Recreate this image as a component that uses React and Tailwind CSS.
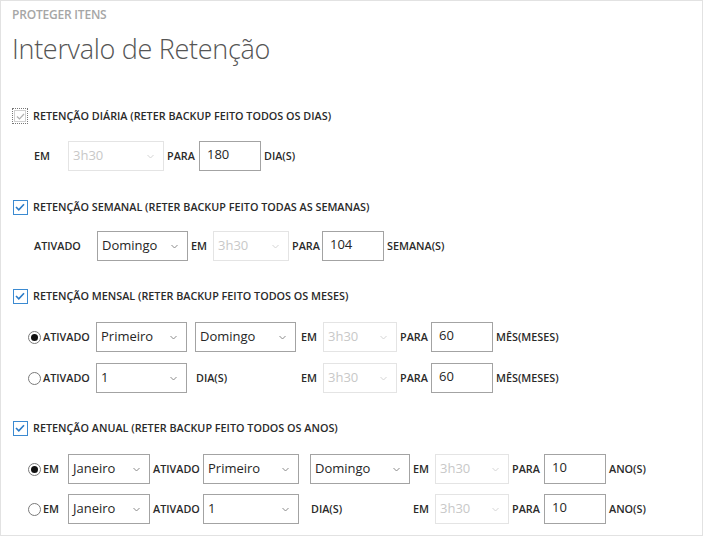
import React from "react";

const F = { fontFamily: '"Open Sans", "Noto Sans", sans-serif' };

function Chevron({ disabled }) {
  return (
    <svg width="7" height="5" viewBox="0 0 7 5" className="shrink-0">
      <path d="M0.5 1 L3.5 4 L6.5 1" fill="none" stroke={disabled ? "#d4d4d4" : "#8a8a8a"} strokeWidth="1" />
    </svg>
  );
}

function Select({ w, value, disabled }) {
  return (
    <div
      className={`h-[30px] ${w} flex items-center justify-between pl-[4px] pr-[9px] border shrink-0 ${
        disabled ? "border-[#e4e4e4] text-[#c8c8c8]" : "border-[#a3a3a3] text-[#262626]"
      } text-[13px]`}
    >
      <span className="leading-none -mt-[2px]">{value}</span>
      <Chevron disabled={disabled} />
    </div>
  );
}

function Input({ value }) {
  return (
    <div className="h-[30px] w-[62px] flex items-center pl-[7px] border border-[#a3a3a3] text-[13px] text-[#262626] shrink-0">
      <span className="leading-none -mt-[4px]">{value}</span>
    </div>
  );
}

function L({ children, w, cls = "" }) {
  return (
    <span className={`text-[10.8px] font-semibold text-[#2a2a2a] whitespace-nowrap shrink-0 ${w || ""} ${cls}`}>
      {children}
    </span>
  );
}

function Check({ dim }) {
  if (dim) {
    return (
      <div className="w-[16px] h-[16px] border border-dotted border-[#777] flex items-center justify-center shrink-0">
        <div className="w-[12px] h-[12px] border border-[#d0d0d0] flex items-center justify-center">
          <svg width="9" height="7" viewBox="0 0 9 7">
            <path d="M1 3.5 L3.5 6 L8 1" fill="none" stroke="#b0b0b0" strokeWidth="1.2" />
          </svg>
        </div>
      </div>
    );
  }
  return (
    <div className="w-[15px] h-[15px] border border-[#3b8ad1] bg-white flex items-center justify-center shrink-0">
      <svg width="10" height="8" viewBox="0 0 10 8">
        <path d="M1 4 L3.8 6.8 L9 1.2" fill="none" stroke="#2a7bc8" strokeWidth="1.6" />
      </svg>
    </div>
  );
}

function Header({ dim, children }) {
  return (
    <div className="h-[16px] flex items-center">
      <div className="w-[16px] flex justify-center">
        <Check dim={dim} />
      </div>
      <L cls="ml-[5px]">{children}</L>
    </div>
  );
}

function Radio({ on }) {
  return (
    <div className="w-[13px] h-[13px] rounded-full border border-[#7a7a7a] flex items-center justify-center shrink-0 bg-white">
      {on && <div className="w-[7px] h-[7px] rounded-full bg-[#111]" />}
    </div>
  );
}

export default function App() {
  return (
    <div style={F} className="w-[704px] h-[538px] bg-white">
      <div className="w-[703px] h-[536px] border border-[#e2e2e2] pl-[11px] flex flex-col">
        <div className="pt-[6px] text-[12px] font-semibold text-[#a6a6a6] tracking-[-0.2px] leading-[16px]">PROTEGER ITENS</div>
        <div className="mt-[8px] text-[27px] font-light text-[#555] leading-[36px] tracking-[-0.3px]">Intervalo de Retenção</div>

        <div className="mt-[41px]">
          <Header dim>RETENÇÃO DIÁRIA (RETER BACKUP FEITO TODOS OS DIAS)</Header>
        </div>
        <div className="mt-[17px] h-[30px] flex items-center">
          <L w="w-[34px]" cls="ml-[22px]">EM</L>
          <Select w="w-[96px]" value="3h30" disabled />
          <L w="w-[32px]" cls="ml-[3px]">PARA</L>
          <Input value="180" />
          <L cls="ml-[3px]">DIA(S)</L>
        </div>

        <div className="mt-[28px]">
          <Header>RETENÇÃO SEMANAL (RETER BACKUP FEITO TODAS AS SEMANAS)</Header>
        </div>
        <div className="mt-[16px] h-[30px] flex items-center">
          <L w="w-[63px]" cls="ml-[22px]">ATIVADO</L>
          <Select w="w-[91px]" value="Domingo" />
          <L w="w-[22px]" cls="ml-[3px]">EM</L>
          <Select w="w-[76px]" value="3h30" disabled />
          <L w="w-[30px]" cls="ml-[3px]">PARA</L>
          <Input value="104" />
          <L cls="ml-[3px]">SEMANA(S)</L>
        </div>

        <div className="mt-[27px]">
          <Header>RETENÇÃO MENSAL (RETER BACKUP FEITO TODOS OS MESES)</Header>
        </div>
        <div className="mt-[18px] h-[30px] flex items-center">
          <div className="w-[68px] ml-[16px] flex items-center gap-[2px] shrink-0">
            <Radio on />
            <L>ATIVADO</L>
          </div>
          <Select w="w-[91px]" value="Primeiro" />
          <div className="w-[8px] shrink-0" />
          <Select w="w-[101px]" value="Domingo" />
          <L w="w-[22px]" cls="ml-[5px]">EM</L>
          <Select w="w-[74px]" value="3h30" disabled />
          <L w="w-[31px]" cls="ml-[3px]">PARA</L>
          <Input value="60" />
          <L cls="ml-[3px]">MÊS(MESES)</L>
        </div>
        <div className="mt-[11px] h-[30px] flex items-center">
          <div className="w-[68px] ml-[16px] flex items-center gap-[2px] shrink-0">
            <Radio />
            <L>ATIVADO</L>
          </div>
          <Select w="w-[91px]" value="1" />
          <L w="w-[105px]" cls="ml-[9px]">DIA(S)</L>
          <L w="w-[22px]">EM</L>
          <Select w="w-[74px]" value="3h30" disabled />
          <L w="w-[31px]" cls="ml-[3px]">PARA</L>
          <Input value="60" />
          <L cls="ml-[3px]">MÊS(MESES)</L>
        </div>

        <div className="mt-[27px]">
          <Header>RETENÇÃO ANUAL (RETER BACKUP FEITO TODOS OS ANOS)</Header>
        </div>
        <div className="mt-[18px] h-[30px] flex items-center">
          <div className="w-[40px] ml-[16px] flex items-center gap-[2px] shrink-0">
            <Radio on />
            <L>EM</L>
          </div>
          <Select w="w-[82px]" value="Janeiro" />
          <L w="w-[50px]" cls="ml-[3px]">ATIVADO</L>
          <Select w="w-[96px]" value="Primeiro" />
          <div className="w-[11px] shrink-0" />
          <Select w="w-[100px]" value="Domingo" />
          <L w="w-[22px]" cls="ml-[3px]">EM</L>
          <Select w="w-[74px]" value="3h30" disabled />
          <L w="w-[32px]" cls="ml-[3px]">PARA</L>
          <Input value="10" />
          <L cls="ml-[3px]">ANO(S)</L>
        </div>
        <div className="mt-[10px] h-[30px] flex items-center">
          <div className="w-[40px] ml-[16px] flex items-center gap-[2px] shrink-0">
            <Radio />
            <L>EM</L>
          </div>
          <Select w="w-[82px]" value="Janeiro" />
          <L w="w-[50px]" cls="ml-[3px]">ATIVADO</L>
          <Select w="w-[96px]" value="1" />
          <L w="w-[102px]" cls="ml-[12px]">DIA(S)</L>
          <L w="w-[22px]">EM</L>
          <Select w="w-[74px]" value="3h30" disabled />
          <L w="w-[32px]" cls="ml-[3px]">PARA</L>
          <Input value="10" />
          <L cls="ml-[3px]">ANO(S)</L>
        </div>
      </div>
    </div>
  );
}
